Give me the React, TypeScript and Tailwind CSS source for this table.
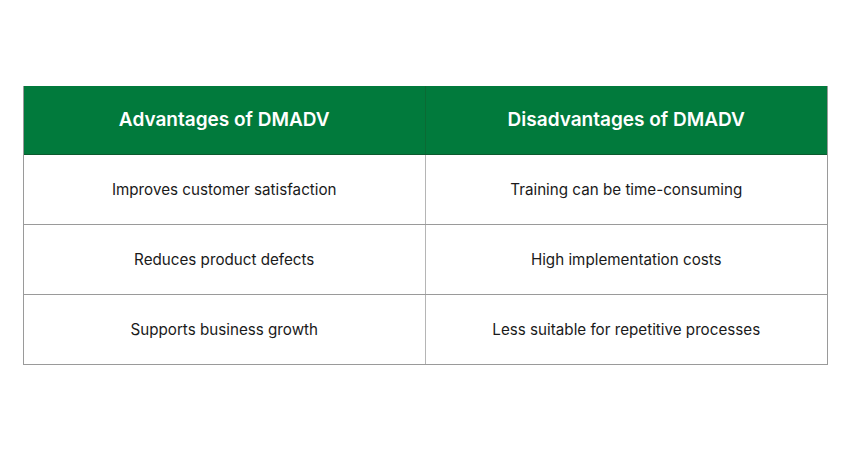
const rows = [
  ["Improves customer satisfaction", "Training can be time-consuming"],
  ["Reduces product defects", "High implementation costs"],
  ["Supports business growth", "Less suitable for repetitive processes"],
];

export default function App() {
  return (
    <div className="w-[850px] h-[450px] bg-white pt-[86px] pl-[23px] font-['Inter','Liberation_Sans',sans-serif]">
      <div className="w-[805px] border-l border-r border-[#9a9a9a]">
        <div className="grid grid-cols-2 bg-[#017a3c] h-[69px] border-b border-[#0b5a2e] text-white text-[19px] font-semibold">
          <div className="flex items-center justify-center border-r border-[#0b6a34]">Advantages of DMADV</div>
          <div className="flex items-center justify-center">Disadvantages of DMADV</div>
        </div>
        {rows.map(([a, b], i) => (
          <div key={i} className="grid grid-cols-2 h-[70px] border-b border-[#9a9a9a] text-[15.2px] text-[#1a1a1a]">
            <div className="flex items-center justify-center pt-[2px] border-r border-[#b5b5b5]">{a}</div>
            <div className="flex items-center justify-center pt-[2px]">{b}</div>
          </div>
        ))}
      </div>
    </div>
  );
}
